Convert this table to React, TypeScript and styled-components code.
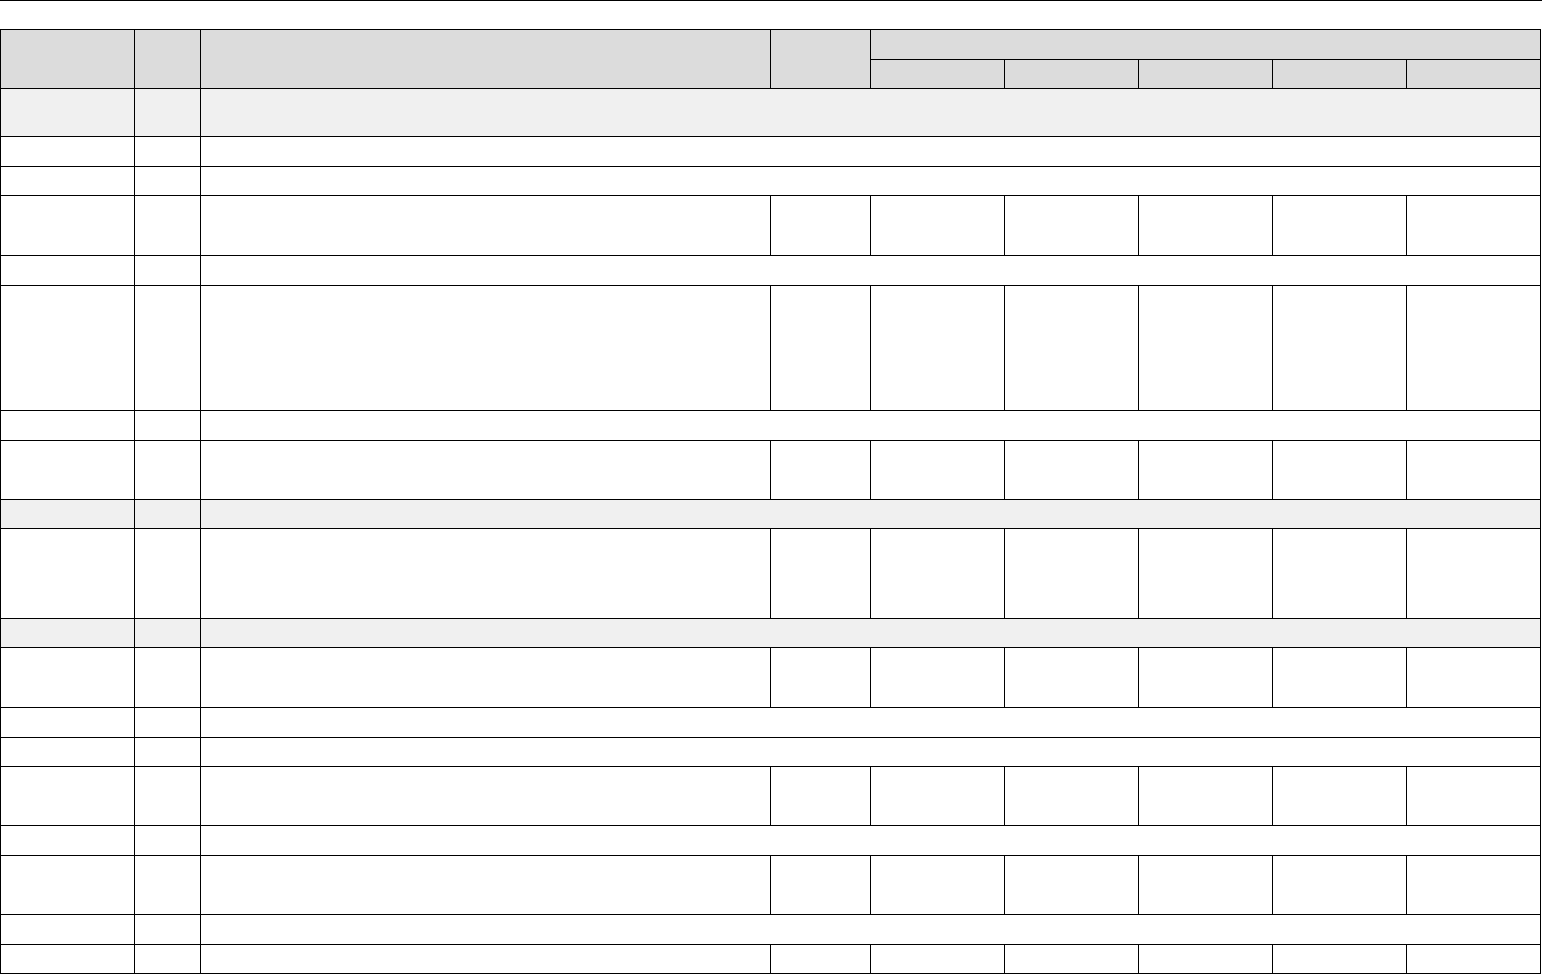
import styled, { createGlobalStyle } from 'styled-components'

const GlobalStyle = createGlobalStyle`
    html, body {
        margin: 0;
        padding: 0;
        background: #ffffff;
        font-family: 'Liberation Sans', Arial, sans-serif;
        font-size: 13px;
    }
`

const colWidths = [134, 66, 570, 100, 134, 134, 134, 134, 134]

// height of each body row, and whether the third cell spans the rest
const rows: { h: number; span: boolean; shade?: boolean }[] = [
    { h: 48, span: true, shade: true },
    { h: 30, span: true },
    { h: 29, span: true },
    { h: 60, span: false },
    { h: 30, span: true },
    { h: 125, span: false },
    { h: 30, span: true },
    { h: 59, span: false },
    { h: 29, span: true, shade: true },
    { h: 90, span: false },
    { h: 29, span: true, shade: true },
    { h: 60, span: false },
    { h: 30, span: true },
    { h: 29, span: true },
    { h: 59, span: false },
    { h: 30, span: true },
    { h: 59, span: false },
    { h: 30, span: true },
    { h: 29, span: false },
]

export default function App() {
    return (
        <>
            <GlobalStyle />
            <Page>
                <TopRule />
                <Table>
                    <colgroup>
                        {colWidths.map((w, i) => (
                            <col key={i} style={{ width: w }} />
                        ))}
                    </colgroup>
                    <thead>
                        <HeadRow $h={30}>
                            <HeadCell rowSpan={2} />
                            <HeadCell rowSpan={2} />
                            <HeadCell rowSpan={2} />
                            <HeadCell rowSpan={2} />
                            <HeadCell colSpan={5} />
                        </HeadRow>
                        <HeadRow $h={29}>
                            <HeadCell />
                            <HeadCell />
                            <HeadCell />
                            <HeadCell />
                            <HeadCell />
                        </HeadRow>
                    </thead>
                    <tbody>
                        {rows.map((r, i) => (
                            <BodyRow key={i} $h={r.h} $shade={!!r.shade}>
                                <Cell />
                                <Cell />
                                {r.span ? (
                                    <Cell colSpan={7} />
                                ) : (
                                    <>
                                        <Cell />
                                        <Cell />
                                        <Cell />
                                        <Cell />
                                        <Cell />
                                        <Cell />
                                        <Cell />
                                    </>
                                )}
                            </BodyRow>
                        ))}
                    </tbody>
                </Table>
            </Page>
        </>
    )
}

const Page = styled.div`
    width: 1544px;
    display: flex;
    flex-direction: column;
`

const TopRule = styled.div`
    width: 1542px;
    height: 29px;
    border-top: 1px solid #000;
    box-sizing: border-box;
`

const Table = styled.table`
    width: 1541px;
    table-layout: fixed;
    border-collapse: collapse;
    border: 1px solid #000;
    margin-top: 0;
`

const HeadRow = styled.tr<{ $h: number }>`
    height: ${(p) => p.$h}px;
    background: #dcdcdc;
`

const HeadCell = styled.th`
    border: 1px solid #000;
    padding: 0;
    font-weight: bold;
`

const BodyRow = styled.tr<{ $h: number; $shade: boolean }>`
    height: ${(p) => p.$h}px;
    background: ${(p) => (p.$shade ? '#f0f0f0' : '#ffffff')};
`

const Cell = styled.td`
    border: 1px solid #000;
    padding: 0;
`
